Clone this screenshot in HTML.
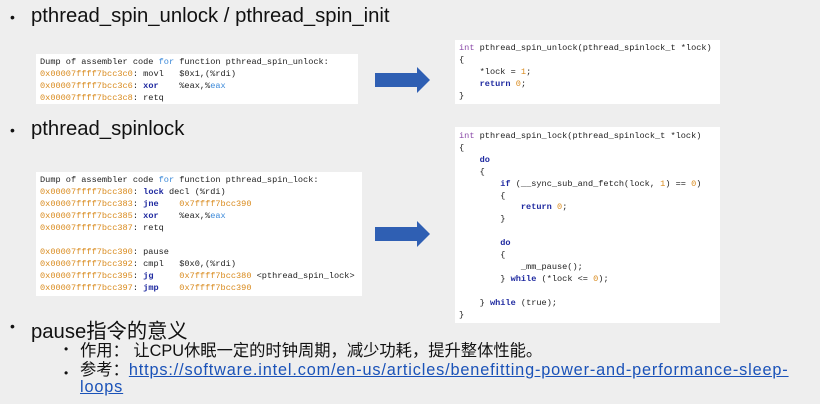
<!DOCTYPE html>
<html><head><meta charset="utf-8"><style>
body{margin:0;width:820px;height:404px;background:#eeeeee;position:relative;overflow:hidden;font-family:"Liberation Sans","Noto Sans CJK SC",sans-serif;color:#111}
.a{position:absolute}
.box{position:absolute;background:#fff;font-family:"Liberation Mono",monospace;font-size:8.6px;line-height:12px;white-space:pre;color:#222;padding:2px 4px;box-sizing:border-box}
.o{color:#d98a1c}.b{color:#1f2aa0;font-weight:bold}.k{color:#3a88d8}.p{color:#8a4aa8}
.h1{font-size:20.3px}
.dot{position:absolute;font-size:14px}
.sub{font-size:16.3px}
a{color:#1a52b8;text-decoration:underline;letter-spacing:0.85px}
</style></head><body>
<div class="dot" style="left:10px;top:9px">•</div>
<div class="a h1" style="left:31px;top:5px">pthread_spin_unlock / pthread_spin_init</div>
<div class="box" style="left:36px;top:54px;width:322px;height:50px">Dump of assembler code <span class="k">for</span> function pthread_spin_unlock:
<span class="o">0x00007ffff7bcc3c0</span>: movl   $0x1,(%rdi)
<span class="o">0x00007ffff7bcc3c6</span>: <span class="b">xor</span>    %eax,%<span class="k">eax</span>
<span class="o">0x00007ffff7bcc3c8</span>: retq</div>
<svg class="a" style="left:375px;top:67px" width="56" height="26"><polygon points="0,6 42,6 42,0 55,13 42,26 42,20 0,20" fill="#2f5fb3"/></svg>
<div class="box" style="left:455px;top:40px;width:265px;height:64px"><span class="p">int</span> pthread_spin_unlock(pthread_spinlock_t *lock)
{
    *lock = <span class="o">1</span>;
    <span class="b">return</span> <span class="o">0</span>;
}</div>
<div class="dot" style="left:10px;top:122px">•</div>
<div class="a h1" style="left:31px;top:118px">pthread_spinlock</div>
<div class="box" style="left:36px;top:172px;width:326px;height:124px">Dump of assembler code <span class="k">for</span> function pthread_spin_lock:
<span class="o">0x00007ffff7bcc380</span>: <span class="b">lock</span> decl (%rdi)
<span class="o">0x00007ffff7bcc383</span>: <span class="b">jne</span>    <span class="o">0x7ffff7bcc390</span>
<span class="o">0x00007ffff7bcc385</span>: <span class="b">xor</span>    %eax,%<span class="k">eax</span>
<span class="o">0x00007ffff7bcc387</span>: retq

<span class="o">0x00007ffff7bcc390</span>: pause
<span class="o">0x00007ffff7bcc392</span>: cmpl   $0x0,(%rdi)
<span class="o">0x00007ffff7bcc395</span>: <span class="b">jg</span>     <span class="o">0x7ffff7bcc380</span> &lt;pthread_spin_lock&gt;
<span class="o">0x00007ffff7bcc397</span>: <span class="b">jmp</span>    <span class="o">0x7ffff7bcc390</span></div>
<svg class="a" style="left:375px;top:221px" width="56" height="26"><polygon points="0,6 42,6 42,0 55,13 42,26 42,20 0,20" fill="#2f5fb3"/></svg>
<div class="box" style="left:455px;top:127px;width:265px;height:196px;line-height:11.9px;padding-top:4px"><span class="p">int</span> pthread_spin_lock(pthread_spinlock_t *lock)
{
    <span class="b">do</span>
    {
        <span class="b">if</span> (__sync_sub_and_fetch(lock, <span class="o">1</span>) == <span class="o">0</span>)
        {
            <span class="b">return</span> <span class="o">0</span>;
        }

        <span class="b">do</span>
        {
            _mm_pause();
        } <span class="b">while</span> (*lock &lt;= <span class="o">0</span>);

    } <span class="b">while</span> (true);
}</div>
<div class="dot" style="left:10px;top:318px">•</div>
<div class="a h1" style="left:31px;top:314px">pause指令的意义</div>
<div class="dot" style="left:64px;top:342px;font-size:12px">•</div>
<div class="a sub" style="left:80px;top:337px">作用： 让CPU休眠一定的时钟周期，减少功耗，提升整体性能。</div>
<div class="dot" style="left:64px;top:366px;font-size:12px">•</div>
<div class="a sub" style="left:80px;top:362px;width:740px;line-height:17px">参考：<a>https://software.intel.com/en-us/articles/benefitting-power-and-performance-sleep-<br>loops</a></div>
</body></html>
